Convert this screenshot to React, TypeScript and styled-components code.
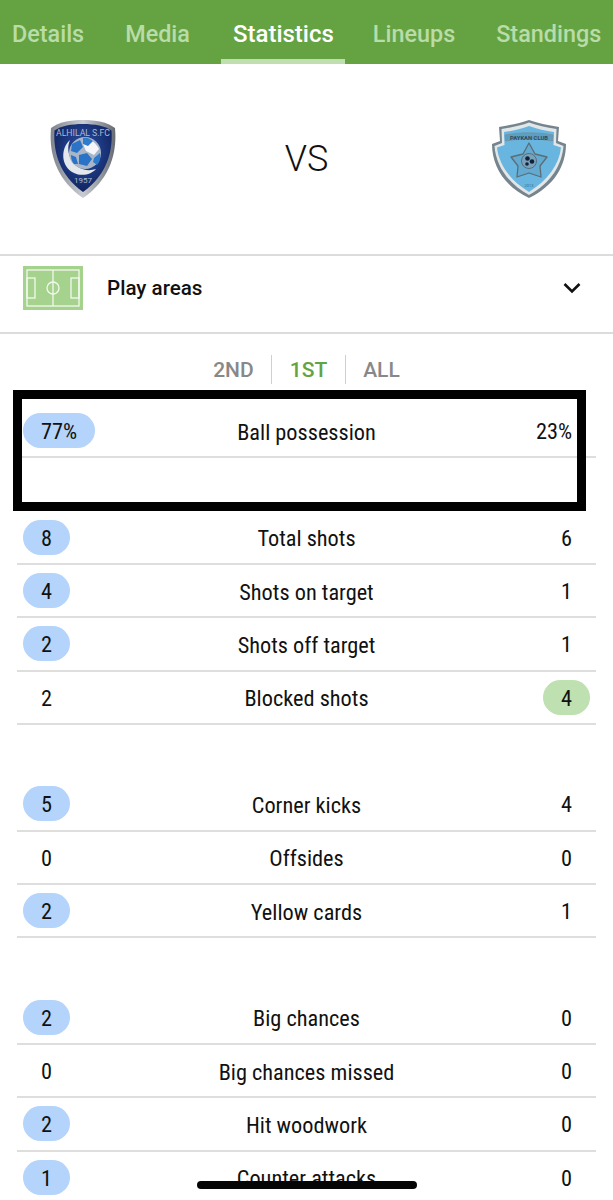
import React from "react";
import styled, { createGlobalStyle } from "styled-components";

const Global = createGlobalStyle`
  html, body { margin: 0; padding: 0; background: #fff; }
  body { font-family: Roboto, "Liberation Sans", sans-serif; color: #111; }
  #root { width: 613px; height: 1200px; overflow: hidden; position: relative; }
`;

const Tabs = styled.nav`
  height: 64px;
  background: #65a342;
  display: flex;
  gap: 20px;
  padding-left: 1.5px;
  box-sizing: border-box;
`;
const Tab = styled.div<{ $active?: boolean }>`
  padding: 8px ${(p) => (p.$active ? "11.5px" : "10.5px")} 0;
  margin: 0 ${(p) => (p.$active ? "-3px 0 1px" : "0")};
  height: 64px;
  box-sizing: border-box;
  display: flex;
  align-items: center;
  font-size: ${(p) => (p.$active ? "24px" : "23.4px")};
  font-weight: 500;
  font-stretch: 90%;
  white-space: nowrap;
  color: ${(p) => (p.$active ? "#ffffff" : "#b9dcA8")};
  border-bottom: 5px solid ${(p) => (p.$active ? "#c0deb0" : "transparent")};
`;
const Match = styled.section`
  height: 190px;
  display: grid;
  grid-template-columns: 1fr auto 1fr;
  align-items: center;
  padding: 0 47px;
  box-sizing: border-box;
`;
const Versus = styled.div`
  font-size: 36px;
  font-weight: 300;
  color: #111;
`;
const Shield = styled.svg<{ $side: "home" | "away"; $w: number }>`
  width: ${(p) => p.$w}px;
  height: 78px;
  display: block;
  justify-self: ${(p) => (p.$side === "home" ? "start" : "end")};
  margin-left: ${(p) => (p.$side === "home" ? "3px" : "0")};
`;
const Areas = styled.section`
  height: 80px;
  border-top: 2px solid #dcdcdc;
  border-bottom: 2px solid #dcdcdc;
  box-sizing: border-box;
  display: flex;
  align-items: center;
  padding: 0 32px 12px 23px;
`;
const AreasLabel = styled.div`
  margin-left: 24px;
  flex: 1;
  font-size: 20.6px;
  font-weight: 500;
  font-stretch: 90%;
  color: #111;
`;
const Periods = styled.div`
  height: 71px;
  display: flex;
  justify-content: center;
  align-items: center;
  box-sizing: border-box;
`;
const Period = styled.div<{ $active?: boolean; $divided?: boolean }>`
  font-size: 21px;
  font-weight: 500;
  font-stretch: 90%;
  line-height: 31px;
  height: 29px;
  padding: 0 17.5px;
  color: ${(p) => (p.$active ? "#64a342" : "#888888")};
  border-left: ${(p) => (p.$divided ? "1px solid #cfcfcf" : "none")};
`;
const Stats = styled.div`
  display: flex;
  flex-direction: column;
  padding: 0 17px;
`;
const Group = styled.div`
  margin-bottom: 53.33px;
`;
const Row = styled.div`
  height: 53.33px;
  box-sizing: border-box;
  border-bottom: 2px solid #dedede;
  display: grid;
  grid-template-columns: 1fr auto 1fr;
  align-items: center;
  padding: 0 6px;
`;
const BlankRow = styled.div`
  height: 53.33px;
`;
const Label = styled.div`
  font-size: 22.3px;
  font-stretch: 75%;
  line-height: 27px;
  padding-top: 3px;
  color: #111;
  text-align: center;
  white-space: nowrap;
`;
const Value = styled.div<{ $side: "home" | "away"; $hue?: "blue" | "green" }>`
  justify-self: ${(p) => (p.$side === "home" ? "start" : "end")};
  height: 35px;
  line-height: 37px;
  min-width: 47px;
  box-sizing: border-box;
  padding: 0 18px;
  border-radius: 17.5px;
  text-align: center;
  font-size: 22.3px;
  font-stretch: 75%;
  color: #111;
  background: ${(p) =>
    p.$hue === "blue" ? "#b4d4fb" : p.$hue === "green" ? "#bfe0b0" : "transparent"};
`;
const Callout = styled.div`
  position: absolute;
  left: 13px;
  top: 390px;
  width: 573px;
  height: 121px;
  box-sizing: border-box;
  border: 9px solid #000;
`;
const HomeBar = styled.div`
  position: absolute;
  left: 197px;
  top: 1181px;
  width: 220px;
  height: 8px;
  border-radius: 4px;
  background: #050505;
`;

const HilalLogo = () => (
  <Shield $side="home" $w={68} viewBox="0 0 68 78" aria-hidden>
    <defs>
      <linearGradient id="hSilver" x1="0" y1="0" x2="1" y2="0">
        <stop offset="0" stopColor="#7f838c" />
        <stop offset=".5" stopColor="#c9ccd2" />
        <stop offset="1" stopColor="#666a73" />
      </linearGradient>
      <radialGradient id="hNavy" cx=".5" cy=".4" r=".7">
        <stop offset="0" stopColor="#2a54ac" />
        <stop offset="1" stopColor="#0d1a50" />
      </radialGradient>
    </defs>
    <path d="M33 0C46 0 57 2 65 8C67 30 62 58 33 78C4 58 -1 30 1 8C9 2 20 0 33 0Z" fill="url(#hSilver)" />
    <path d="M33 4C45 4 55 6 61.500 10.500C63 31 57 55 33 72C9 55 3 31 4.500 10.500C11 6 21 4 33 4Z" fill="url(#hNavy)" />
    <text x="33" y="16" textAnchor="middle" fontFamily="Roboto, sans-serif" fontSize="8.500" fill="#aeb8d2" textLength="54" lengthAdjust="spacingAndGlyphs">ALHILAL S.FC</text>
    <path d="M20 20C10 29 11 47 24 53C32 57 42 54 46 49C37 52 27 49 22 41C18 34 17 27 20 20Z" fill="#e4e7ec" />
    <circle cx="35" cy="33" r="16" fill="#a9b6c8" />
    <path d="M35 18C41 19 46 23 49 29L44 35L36 31L33 24Z" fill="#f4f6f9" />
    <path d="M22 24L30 20L33 27L27 33L21 31Z" fill="#2a73c6" />
    <path d="M29 35L37 33L42 39L37 46L29 44Z" fill="#2a73c6" />
    <path d="M44 38L50 33C51 38 50 42 47 45L43 42Z" fill="#2f7ccc" />
    <path d="M33 18C38 17 40 19 43 21L38 26L33 24Z" fill="#2f7ccc" />
    <path d="M21 35L26 37L28 44L24 44C22 42 21 39 21 35Z" fill="#2a73c6" />
    <text x="33" y="63" textAnchor="middle" fontFamily="Roboto, sans-serif" fontSize="6.500" fill="#b4bccd" textLength="18" lengthAdjust="spacingAndGlyphs">1957</text>
  </Shield>
);

const PaykanLogo = () => (
  <Shield $side="away" $w={74} viewBox="0 0 74 78" aria-hidden>
    <path d="M37 0C45 3 56 5 67 7L66 21L74 24C74 46 62 66 37 78C12 66 0 46 0 24L8 21L7 7C18 5 29 3 37 0Z" fill="#76848d" />
    <path d="M37 2.500C45 5.500 54 7.500 64.500 9L64 23L71.500 26C70 45 59 63 37 75C15 63 4 45 2.500 26L10 23L9.500 9C20 7.500 29 5.500 37 2.500Z" fill="#e1e6e8" />
    <path d="M37 6C45 9 54 11 62 12L61.500 25L69 27.500C67 45 56 60 37 72C18 60 7 45 5 27.500L12.500 25L12 12C20 11 29 9 37 6Z" fill="#68b6e0" />
    <path d="M13 15C28 12 46 12 61 15L60.500 21C46 18.500 28 18.500 13.500 21Z" fill="#5c9fc4" stroke="#7a8c97" strokeWidth=".7" />
    <text x="37" y="19.500" textAnchor="middle" fontFamily="Roboto, sans-serif" fontSize="5.500" fontWeight="700" fill="#33485a" textLength="38" lengthAdjust="spacingAndGlyphs">PAYKAN CLUB</text>
    <path d="M37 23L43 34L55 37L48 46L49 57L37 53L25 57L26 46L19 37L31 34Z" fill="#64a9cf" stroke="#5a6d79" strokeWidth="1.300" strokeLinejoin="round" />
    <circle cx="37" cy="41" r="7.500" fill="#7aa3bb" stroke="#4c6170" strokeWidth=".8" />
    <circle cx="35.500" cy="38.500" r="2.300" fill="#10223a" />
    <circle cx="40" cy="41.500" r="2.300" fill="#10223a" />
    <circle cx="35" cy="44" r="1.800" fill="#10223a" />
    <text x="37" y="67" textAnchor="middle" fontFamily="Roboto, sans-serif" fontSize="4" fill="#3e6a85">2013</text>
  </Shield>
);

const PitchIcon = () => (
  <svg width="60" height="44" viewBox="0 0 60 44" aria-hidden style={{ flex: "none", display: "block" }}>
    <rect width="60" height="44" fill="#a5d28d" />
    <g fill="none" stroke="#f3f9ee" strokeWidth="1.300">
      <rect x="4" y="4" width="52" height="36" />
      <line x1="30" y1="4" x2="30" y2="40" />
      <circle cx="30" cy="22" r="6" />
      <rect x="4" y="12" width="8" height="20" />
      <rect x="48" y="12" width="8" height="20" />
    </g>
  </svg>
);

const Chevron = () => (
  <svg width="18" height="12" viewBox="0 0 18 12" aria-hidden style={{ display: "block" }}>
    <path d="M1.500 2L9 9.500L16.500 2" fill="none" stroke="#111" strokeWidth="2.600" />
  </svg>
);

type Stat = { label: string; home: string; away: string; win?: "home" | "away" };

const groups: (Stat | null)[][] = [
  [
    { label: "Ball possession", home: "77%", away: "23%", win: "home" },
    null,
    { label: "Total shots", home: "8", away: "6", win: "home" },
    { label: "Shots on target", home: "4", away: "1", win: "home" },
    { label: "Shots off target", home: "2", away: "1", win: "home" },
    { label: "Blocked shots", home: "2", away: "4", win: "away" },
  ],
  [
    { label: "Corner kicks", home: "5", away: "4", win: "home" },
    { label: "Offsides", home: "0", away: "0" },
    { label: "Yellow cards", home: "2", away: "1", win: "home" },
  ],
  [
    { label: "Big chances", home: "2", away: "0", win: "home" },
    { label: "Big chances missed", home: "0", away: "0" },
    { label: "Hit woodwork", home: "2", away: "0", win: "home" },
    { label: "Counter attacks", home: "1", away: "0", win: "home" },
  ],
];

export default function App() {
  return (
    <>
      <Global />
      <Tabs>
        <Tab>Details</Tab>
        <Tab>Media</Tab>
        <Tab $active>Statistics</Tab>
        <Tab>Lineups</Tab>
        <Tab>Standings</Tab>
      </Tabs>
      <Match>
        <HilalLogo />
        <Versus>VS</Versus>
        <PaykanLogo />
      </Match>
      <Areas>
        <PitchIcon />
        <AreasLabel>Play areas</AreasLabel>
        <Chevron />
      </Areas>
      <Periods>
        <Period>2ND</Period>
        <Period $active $divided>1ST</Period>
        <Period $divided>ALL</Period>
      </Periods>
      <Stats>
        {groups.map((g, i) => (
          <Group key={i}>
            {g.map((s, j) =>
              s ? (
                <Row key={j}>
                  <Value $side="home" $hue={s.win === "home" ? "blue" : undefined}>{s.home}</Value>
                  <Label>{s.label}</Label>
                  <Value $side="away" $hue={s.win === "away" ? "green" : undefined}>{s.away}</Value>
                </Row>
              ) : (
                <BlankRow key={j} />
              )
            )}
          </Group>
        ))}
      </Stats>
      <Callout />
      <HomeBar />
    </>
  );
}
